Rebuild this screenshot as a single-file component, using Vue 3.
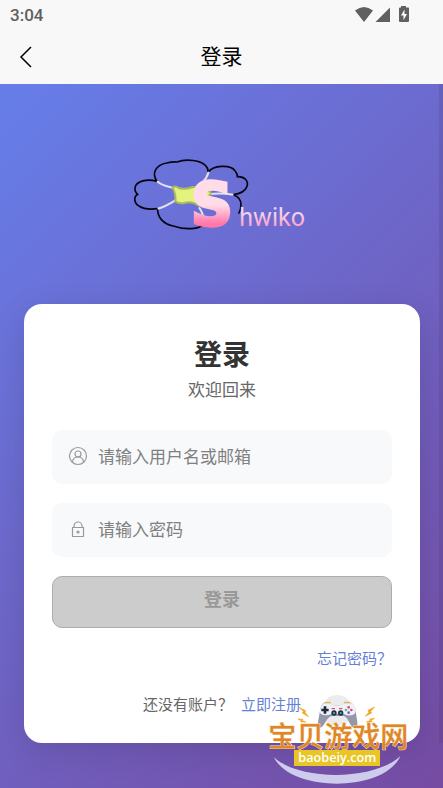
<script setup>
	import { reactive, computed } from 'vue'

	const form=reactive({
		username:'',
		password:''
	})

	// 两项都填写后才能登录
	const disabled=computed(()=>!form.username.trim()||!form.password)

	const back=()=>{
		window.history.back()
	}
</script>
<template>
	<div class="page">
		<header class="top">
			<div class="status">
				<span class="time">3:04</span>
				<svg class="signals" viewBox="0 0 56 18" aria-hidden="true">
					<path d="M0 4.5Q9-2.5 18 4.5L9 16Z" />
					<path d="M20.5 16H35V1.5Z" />
					<path d="M46 1.5V0h5v1.5h2.5Q54 1.500 54 2.500V15q0 1-1 1h-8q-1 0-1-1V2.500q0-1 1-1Z" />
					<path class="bolt" d="M49.500 3.500L46 9.500h2.500V14L52 8h-2.500Z" />
				</svg>
			</div>
			<div class="nav">
				<button class="back" type="button" aria-label="返回" @click="back">
					<svg viewBox="0 0 14 22"><path d="M12 1L2 11L12 21" /></svg>
				</button>
				<h1>登录</h1>
			</div>
		</header>
		<main class="content">
			<svg class="logo" viewBox="6 0 570 270" role="img" aria-label="Shwiko">
				<defs>
					<linearGradient id="pinkBig" x1="0" y1="0" x2="0" y2="1">
						<stop offset="0.5" stop-color="#ffdce7" />
						<stop offset="0.78" stop-color="#ff76a9" />
					</linearGradient>
					<linearGradient id="pinkSmall" x1="0" y1="0" x2="0" y2="1">
						<stop offset="0.35" stop-color="#f4d5ed" />
						<stop offset="0.8" stop-color="#ff9fc8" />
					</linearGradient>
				</defs>
				<g class="petal">
					<path d="M96 94C78 69 94 44 125 39Q143 35 156 36C183 25 229 31 243 48Q251 57 249 68" />
					<path d="M251 65C264 47 315 42 330 62Q338 72 337 80C360 79 371 94 366 109Q358 130 325 134Q348 142 348 164Q348 180 341 191" />
					<path d="M96 94C67 85 34 93 30 113Q29 126 38 133C25 141 27 160 42 168Q61 181 98 176" />
					<path d="M98 176C97 202 115 222 145 228Q176 239 207 235Q233 232 239 218" />
				</g>
				<g class="vein">
					<path d="M96 94Q112 108 143 113" />
					<path d="M251 65Q246 84 232 98" />
					<path d="M98 176Q121 170 151 151" />
					<path d="M254 132Q290 128 325 134" />
					<path d="M222 172Q235 190 238 215" />
				</g>
				<path class="core" d="M143 112Q151 106 161 114Q181 120 203 111H240Q244 124 256 125Q261 136 248 138L222 167Q203 153 181 158Q164 163 151 154Q154 137 143 112Z" />
				<text class="big" x="198" y="225">S</text>
				<text class="small" x="343" y="227">hwiko</text>
			</svg>
			<section class="card">
				<h2>登录</h2>
				<p class="welcome">欢迎回来</p>
				<form @submit.prevent>
					<label class="field">
						<svg viewBox="0 0 20 20" aria-hidden="true">
							<circle cx="10" cy="10" r="8.500" />
							<circle cx="10" cy="8" r="3" />
							<path d="M4.500 16Q5 11 10 11T15.500 16" />
						</svg>
						<input type="text" aria-label="用户名或邮箱" placeholder="请输入用户名或邮箱" v-model.trim="form.username" />
					</label>
					<label class="field">
						<svg viewBox="0 0 20 20" aria-hidden="true">
							<path d="M4.500 8.500h11v9h-11ZM6 8.500V7a4 4 0 0 1 8 0v1.500" />
							<circle class="dot" cx="10" cy="13" r="1" />
						</svg>
						<input type="password" aria-label="密码" placeholder="请输入密码" v-model="form.password" />
					</label>
					<button class="submit" type="submit" :disabled="disabled">登录</button>
				</form>
				<a class="forgot" href="#">忘记密码？</a>
				<p class="register">还没有账户？<a href="#">立即注册</a></p>
			</section>
		</main>
		<!-- 右下角站点水印 -->
		<svg class="mark" viewBox="30 159 450 285" role="img" aria-label="宝贝游戏网 baobeiy.com">
			<circle cx="247" cy="211" r="46" fill="#ececee" />
			<path d="M205 190q2-5 8-5h14v8h-22ZM267 185h14q6 0 8 5v3h-22Z" fill="#e9b34e" />
			<path d="M207 190H226Q233 197 246 197T268 190H288Q298 192 301 207L307 246Q309 264 299 265Q290 264 281 244Q275 230 265 228H231Q220 230 213 244Q202 265 194 263Q187 260 189 246L196 207Q198 192 207 190Z" fill="#9697a9" />
			<path d="M207 190H226Q233 197 246 197T268 190H288Q298 192 302 207Q304 219 295 224Q280 230 265 221H231Q212 230 198 222Q192 216 196 207Q199 193 207 190Z" fill="#f0f0f6" />
			<path d="M206 199h8v7h7v8h-7v7h-8v-7h-7v-8h7Z" fill="#1b2a3c" />
			<circle cx="237" cy="219" r="8" fill="#203247" />
			<circle cx="257" cy="219" r="8" fill="#203247" />
			<g fill="#59b9ba">
				<circle cx="237" cy="219" r="3" />
				<circle cx="257" cy="219" r="3" />
				<circle cx="273" cy="210" r="4" />
			</g>
			<g fill="#d95367">
				<path d="M230 204h10v4h-10ZM252 204h10v4h-10Z" />
				<circle cx="281" cy="202" r="4" />
				<circle cx="289" cy="210" r="4" />
			</g>
			<circle cx="281" cy="218" r="4" fill="#6567cf" />
			<path d="M132 202L152 212L150 217L160 230L142 219L145 214ZM129 237L144 238L142 242L153 246L137 246L139 242ZM359 201L339 211L341 217L331 229L350 219L347 214ZM359 235L344 237L347 241L334 246L351 246L349 241Z" fill="#f0a72d" stroke="#f0a72d" stroke-width="2" />
			<path d="M56 351C132 424 360 422 436 348C389 457 109 459 56 351Z" fill="#ceccec" />
			<text class="site" x="250" y="320">宝贝游戏网</text>
			<rect x="117" y="330" width="258" height="48" fill="#e9c625" />
			<text class="domain" x="247" y="367">baobeiy.com</text>
		</svg>
		<div class="scrollbar"></div>
	</div>
</template>
<style>
	body {
	margin: 0;
	background: #764ba2;
	}
</style>
<style scoped>
	.page {
	position: relative;
	display: flex;
	flex-direction: column;
	min-height: 100vh;
	font-family: "Noto Sans CJK SC", sans-serif;
	}
	h1, h2, p {
	margin: 0;
	}
	a {
	color: #667fd6;
	text-decoration: none;
	}
	.top {
	background: #f8f8f8;
	}
	.status {
	display: flex;
	align-items: center;
	justify-content: space-between;
	height: 30px;
	padding: 0 32px 0 10px;
	}
	.time {
	color: #606060;
	font: 500 17px Roboto, sans-serif;
	}
	.signals {
	width: 56px;
	height: 18px;
	fill: #606060;
	}
	.signals .bolt {
	fill: #fff;
	}
	.nav {
	display: grid;
	grid-template-columns: 54px 1fr 54px;
	align-items: center;
	height: 54px;
	}
	.back {
	display: flex;
	padding: 0 0 0 19px;
	border: 0;
	background: none;
	cursor: pointer;
	}
	.back svg {
	width: 14px;
	height: 22px;
	fill: none;
	stroke: #000;
	stroke-width: 1.5;
	}
	.nav h1 {
	padding-bottom: 4px;
	color: #000;
	font-size: 21px;
	font-weight: 400;
	line-height: 30px;
	text-align: center;
	}
	.content {
	flex: 1;
	display: flex;
	flex-direction: column;
	padding: 66px 23px 45px 24px;
	background: linear-gradient(135deg, #667eea 0%, #764ba2 100%);
	}
	.logo {
	align-self: center;
	width: 190px;
	height: 90px;
	margin-bottom: 64px;
	}
	.petal {
	fill: none;
	stroke: #050510;
	stroke-width: 5;
	}
	.vein {
	fill: none;
	stroke: #e2e0f0;
	stroke-width: 6;
	}
	.core {
	fill: #e2f47b;
	stroke: #adb85e;
	stroke-width: 6;
	}
	.logo .big {
	fill: url(#pinkBig);
	stroke: url(#pinkBig);
	stroke-width: 10;
	font: bold 174px "DejaVu Sans", sans-serif;
	}
	.logo .small {
	fill: url(#pinkSmall);
	font: 75px Roboto, sans-serif;
	}
	.card {
	display: flex;
	flex-direction: column;
	padding: 29px 28px 27px;
	border-radius: 18px;
	background: #fff;
	box-shadow: 0 8px 32px rgba(0, 0, 0, 0.12);
	}
	.card h2 {
	color: #333;
	font-size: 28px;
	line-height: 40px;
	text-align: center;
	}
	.welcome {
	margin-top: 4px;
	color: #666;
	font-size: 17px;
	line-height: 24px;
	text-align: center;
	}
	form {
	display: flex;
	flex-direction: column;
	gap: 19px;
	margin-top: 29px;
	}
	.field {
	display: flex;
	align-items: center;
	gap: 10px;
	height: 54px;
	padding: 0 16px 2px;
	border-radius: 10px;
	box-sizing: border-box;
	background: #f8f9fb;
	}
	.field svg {
	flex: none;
	width: 20px;
	height: 20px;
	fill: none;
	stroke: #999;
	stroke-width: 1.2;
	}
	.field .dot {
	fill: #999;
	}
	.field input {
	flex: 1;
	min-width: 0;
	padding: 0;
	border: 0;
	outline: none;
	background: none;
	color: #333;
	font-family: inherit;
	font-size: 17px;
	line-height: 24px;
	}
	.field input::placeholder {
	color: #808080;
	}
	.submit {
	height: 52px;
	padding: 0 0 8px;
	border: 1px solid #667eea;
	border-radius: 10px;
	background: #667eea;
	color: #fff;
	font-family: inherit;
	font-size: 18px;
	font-weight: bold;
	}
	.submit:disabled {
	border-color: #adadad;
	background: #ccc;
	color: #999;
	}
	.forgot {
	align-self: flex-end;
	margin-top: 18px;
	font-size: 15px;
	line-height: 24px;
	}
	.register {
	margin-top: 22px;
	color: #666;
	font-size: 15px;
	line-height: 24px;
	text-align: center;
	}
	.register a {
	margin-left: 8px;
	}
	.mark {
	position: absolute;
	right: 28px;
	bottom: 0;
	width: 150px;
	height: 95px;
	pointer-events: none;
	}
	.mark text {
	text-anchor: middle;
	}
	.mark .site {
	fill: #e0862a;
	stroke: #f7dfb4;
	stroke-width: 3;
	paint-order: stroke;
	font-size: 84px;
	font-weight: 500;
	}
	.mark .domain {
	fill: #fff;
	font: 600 38px "Open Sans", sans-serif;
	}
	.scrollbar {
	position: absolute;
	top: 84px;
	right: 0;
	bottom: 45px;
	width: 4px;
	background: rgba(60, 50, 90, 0.16);
	}
</style>
